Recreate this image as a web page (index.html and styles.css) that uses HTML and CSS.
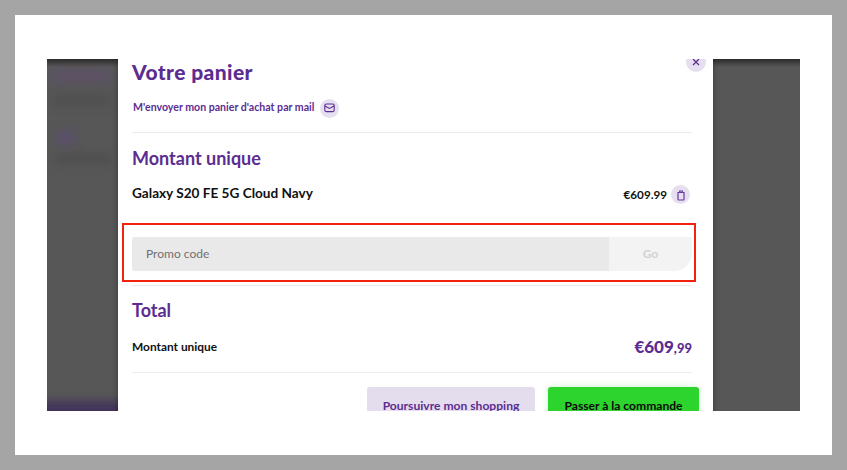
FILE: index.html
```html
<!doctype html>
<html lang="fr">
  <head>
    <meta charset="UTF-8" />
    <meta name="viewport" content="width=device-width, initial-scale=1.0" />
    <title>Votre panier</title>
    <link rel="stylesheet" href="styles.css">
  </head>
  <body>
    <div class="frame">
      <div class="shot">
        <!-- Blurred page behind the modal -->
        <div class="backdrop">
          <div class="blob blob-head"></div>
          <div class="blob blob-line"></div>
          <div class="blob blob-dot"></div>
          <div class="blob blob-line2"></div>
          <div class="blob blob-foot"></div>
          <div class="top-shade"></div>
        </div>

        <div class="modal">
          <button class="icon-btn close-btn" aria-label="Fermer">
            <svg width="10" height="10" viewBox="0 0 10 10" fill="none" stroke="#5c2d91" stroke-width="1.3">
              <path d="M2 2l6 6M8 2l-6 6" />
            </svg>
          </button>

          <h1 class="modal-title">Votre panier</h1>

          <div class="mail-row">
            <span class="mail-text">M'envoyer mon panier d'achat par mail</span>
            <button class="icon-btn" aria-label="Mail">
              <svg width="11" height="10" viewBox="0 0 11 10" fill="none" stroke="#5c2d91" stroke-width="1.1">
                <rect x="0.8" y="1" width="9.4" height="7.6" rx="1.5" />
                <path d="M1 3l4.500 2.400L10 3" />
              </svg>
            </button>
          </div>

          <h2 class="section-title first">Montant unique</h2>

          <div class="item-row">
            <span class="item-name">Galaxy S20 FE 5G Cloud Navy</span>
            <span class="item-price">€609.99</span>
            <button class="icon-btn" aria-label="Supprimer">
              <svg width="10" height="12" viewBox="0 0 10 12" fill="none" stroke="#6a35a5" stroke-width="1.2">
                <path d="M2 3.500h6v6.700a.8.8 0 0 1-.8.8H2.800a.8.8 0 0 1-.8-.8z" />
                <path d="M3.700 3.500V2h2.600v1.500" />
              </svg>
            </button>
          </div>

          <div class="promo-wrap">
            <div class="promo">
              <div class="promo-input"><span>Promo code</span></div>
              <div class="promo-go"><span>Go</span></div>
            </div>
            <div class="highlight"></div>
          </div>

          <h2 class="section-title total-title">Total</h2>

          <div class="total-row">
            <span class="total-label">Montant unique</span>
            <span class="total-price">€609<small>,99</small></span>
          </div>

          <div class="actions">
            <button class="btn btn-light">Poursuivre mon shopping</button>
            <button class="btn btn-green">Passer à la commande</button>
          </div>
        </div>
      </div>
    </div>
  </body>
</html>
```

FILE: styles.css
```css
:root {
  --purple: #5c2d91;
  --lilac: #e6dff0;
  --line: #e9e9ec;
}

html,
body {
  height: 100%;
}

body {
  margin: 0;
  padding: 15px;
  box-sizing: border-box;
  background-color: #a5a5a5;
  font-family: 'Lato', 'Liberation Sans', sans-serif;
  overflow: hidden;
}

.frame {
  width: 817px;
  height: 440px;
  padding: 44px 32px;
  box-sizing: border-box;
  background-color: #fff;
}

.shot {
  position: relative;
  height: 352px;
  padding-left: 71px;
  overflow: hidden;
  background-color: #575757;
}

/* Backdrop */
.backdrop {
  position: absolute;
  inset: 0;
  overflow: hidden;
}

.blob {
  position: absolute;
  filter: blur(5px);
}

.blob-head {
  left: 4px;
  top: 10px;
  width: 60px;
  height: 14px;
  background-color: #5c5166;
}

.blob-line {
  left: 4px;
  top: 38px;
  width: 60px;
  height: 8px;
  background-color: #4d4d4d;
}

.blob-dot {
  left: 10px;
  top: 72px;
  width: 18px;
  height: 14px;
  background-color: #5a4f6b;
}

.blob-line2 {
  left: 8px;
  top: 96px;
  width: 56px;
  height: 8px;
  background-color: #4c4c4c;
}

.blob-foot {
  left: -10px;
  bottom: -8px;
  width: 100px;
  height: 18px;
  background-color: #42345a;
}

.top-shade {
  position: absolute;
  left: 0;
  right: 0;
  top: 0;
  height: 8px;
  background: linear-gradient(#2b2b2b, rgba(87, 87, 87, 0));
}

/* Modal */
.modal {
  position: relative;
  width: 595px;
  height: 392px;
  padding: 0 21px 0 14px;
  box-sizing: border-box;
  background-color: #fff;
  box-shadow: 0 0 6px rgba(0, 0, 0, 0.35);
}

.modal-title {
  margin: 0;
  padding-top: 1px;
  font-size: 21px;
  line-height: 24px;
  letter-spacing: 0.4px;
  font-weight: 900;
  color: var(--purple);
}

.icon-btn {
  display: flex;
  align-items: center;
  justify-content: center;
  flex: none;
  width: 19px;
  height: 19px;
  padding: 0;
  border: none;
  border-radius: 50%;
  background-color: var(--lilac);
}

.close-btn {
  position: absolute;
  right: 7px;
  top: -7px;
  width: 20px;
  height: 20px;
}

.mail-row {
  display: flex;
  align-items: center;
  gap: 6px;
  height: 49px;
  padding-left: 1px;
  border-bottom: 1px solid var(--line);
  box-sizing: border-box;
}

.mail-text {
  position: relative;
  top: -1px;
  font-size: 10.600px;
  font-weight: 700;
  color: var(--purple);
}

.section-title {
  margin: 14px 0 0;
  font-size: 18px;
  line-height: 22px;
  font-weight: 700;
  color: var(--purple);
}

.item-row {
  display: flex;
  align-items: center;
  height: 19px;
  margin-top: 16px;
  padding-right: 2px;
}

.item-name {
  font-size: 13.600px;
  font-weight: 700;
  color: #111;
  margin-right: auto;
  position: relative;
  top: -2px;
}

.item-price {
  font-size: 11.700px;
  font-weight: 700;
  color: #111;
  margin-right: 4px;
  position: relative;
  top: -1px;
}

.promo-wrap {
  position: relative;
  margin-top: 33px;
  padding-bottom: 14px;
  border-bottom: 1px solid var(--line);
}

.promo {
  display: flex;
  height: 34px;
  font-size: 12px;
}

.promo span {
  position: relative;
  top: -1px;
}

.promo-input {
  flex: 1;
  display: flex;
  align-items: center;
  padding-left: 14px;
  color: #707070;
  background-color: #e9e9e9;
  border-radius: 3px 0 0 3px;
}

.promo-go {
  display: flex;
  align-items: center;
  justify-content: center;
  width: 83px;
  font-weight: 700;
  color: #d2d2d2;
  background-color: #f3f3f3;
  border-radius: 0 0 18px 0;
}

.highlight {
  position: absolute;
  left: -10px;
  top: -14px;
  width: 574px;
  height: 59px;
  box-sizing: border-box;
  border: 2px solid #f5210f;
}

.total-title {
  margin-top: 13px;
}

.total-row {
  display: flex;
  align-items: center;
  justify-content: space-between;
  height: 26px;
  margin-top: 12px;
  font-weight: 700;
}

.total-label {
  font-size: 11.900px;
  color: #111;
}

.total-price {
  font-size: 17px;
  font-weight: 900;
  color: var(--purple);
}

.total-price small {
  font-size: 13px;
}

.actions {
  display: flex;
  justify-content: flex-end;
  gap: 13px;
  margin-top: 13px;
  margin-right: -7px;
  padding-top: 15px;
  position: relative;
}

.actions::before {
  content: '';
  position: absolute;
  left: 0;
  right: 7px;
  top: 0;
  border-top: 1px solid #eef0f0;
}

.btn {
  height: 36px;
  padding: 0;
  border: none;
  border-radius: 3px;
  font-family: inherit;
  font-size: 12.100px;
  font-weight: 700;
}

.btn-light {
  width: 168px;
  color: var(--purple);
  background-color: #e4dded;
}

.btn-green {
  width: 151px;
  color: #0a0a0a;
  background-color: #2dd42d;
  box-shadow: 0 0 6px rgba(45, 212, 45, 0.25);
}
```
